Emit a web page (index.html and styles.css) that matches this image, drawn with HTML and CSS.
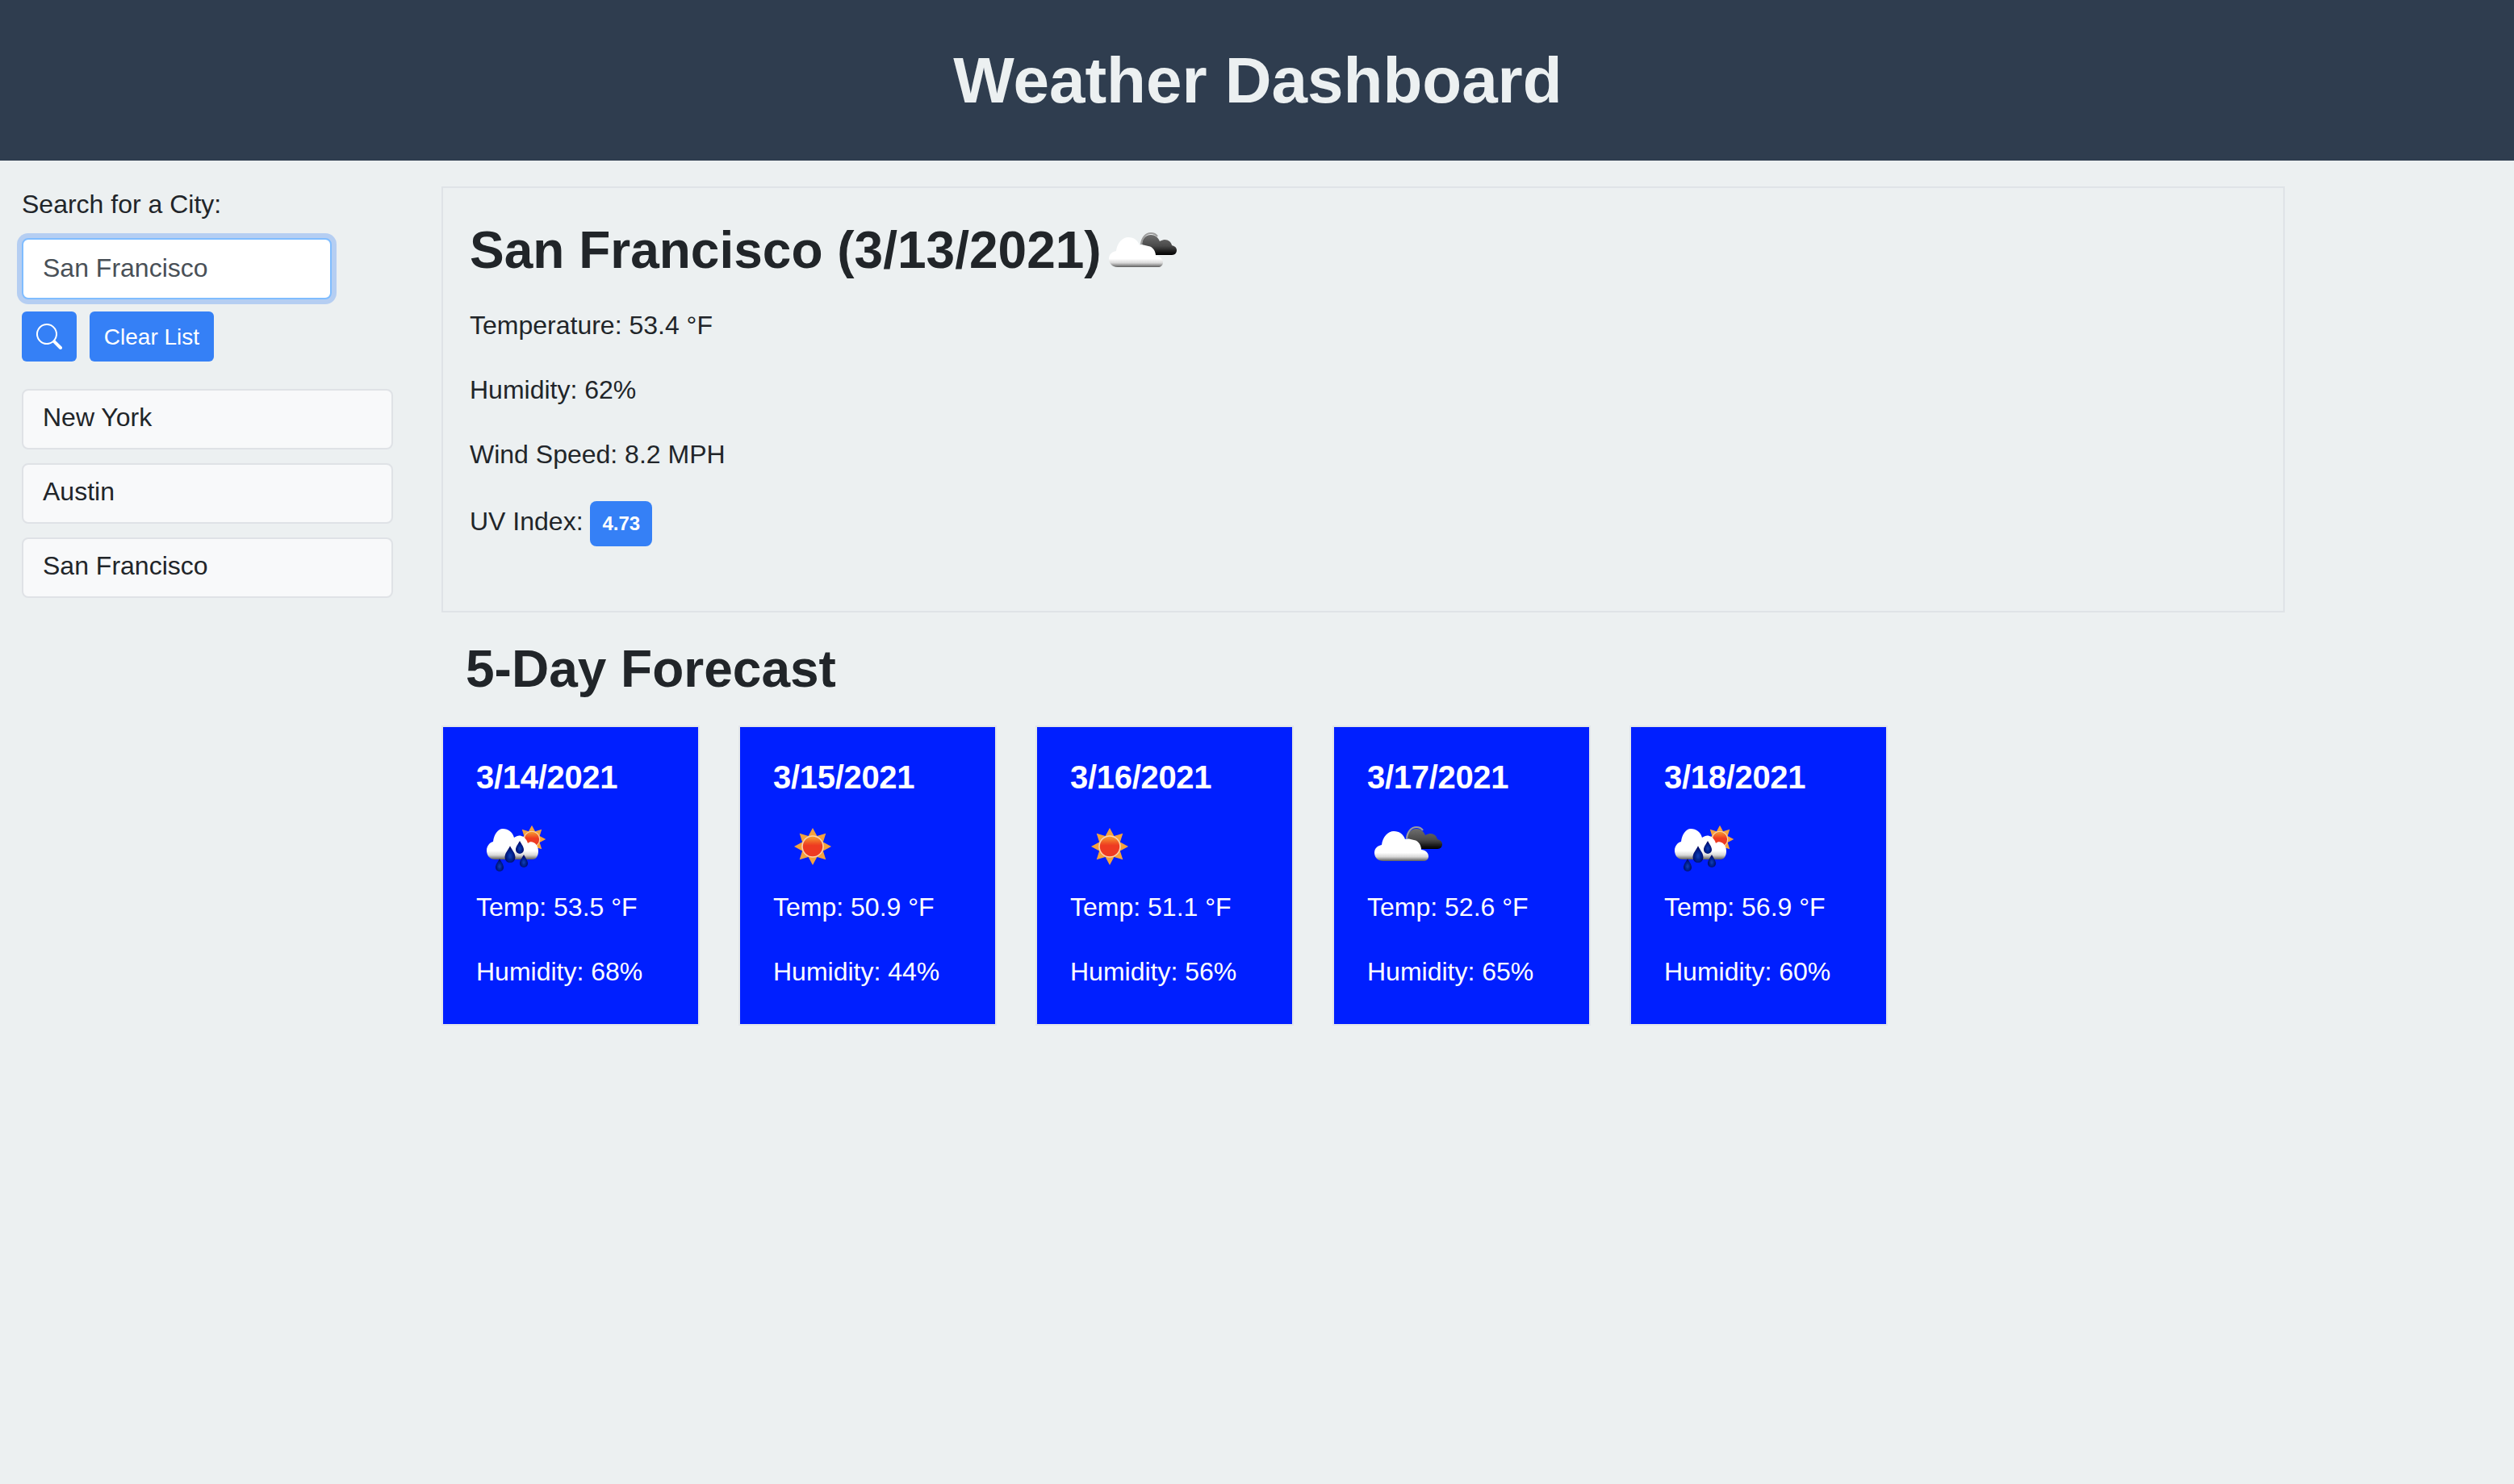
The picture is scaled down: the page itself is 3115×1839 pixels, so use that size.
FILE: index.html
```html
<!DOCTYPE html>
<html lang="en">
<head>
<meta charset="utf-8">
<title>Weather Dashboard</title>
<link rel="stylesheet" href="styles.css">
</head>
<body>
<svg class="defs" width="0" height="0" aria-hidden="true">
  <defs>
    <linearGradient id="gWhite" x1="0" y1="0" x2="0" y2="1">
      <stop offset="0" stop-color="#fff"/><stop offset=".72" stop-color="#fff"/><stop offset=".86" stop-color="#d8d8d8"/><stop offset="1" stop-color="#5e5e5e"/>
    </linearGradient>
    <linearGradient id="gDark" x1="0" y1="0" x2="0" y2="1">
      <stop offset="0" stop-color="#6e6e6e"/><stop offset=".55" stop-color="#4a4a4a"/><stop offset="1" stop-color="#000"/>
    </linearGradient>
    <linearGradient id="gDisc" x1="0" y1="0" x2="0" y2="1">
      <stop offset="0" stop-color="#f6a531"/><stop offset=".45" stop-color="#ee3a20"/><stop offset="1" stop-color="#ee3a20"/>
    </linearGradient>
    <radialGradient id="gDrop" cx=".5" cy=".6" r=".5">
      <stop offset="0" stop-color="#0b3fb5"/><stop offset=".6" stop-color="#03208c"/><stop offset="1" stop-color="#000a66"/>
    </radialGradient>
    <filter id="soft" x="-10%" y="-10%" width="120%" height="120%"><feGaussianBlur stdDeviation=".55"/></filter>
    <g id="sunShape">
      <polygon fill="#f4a23c" points="0,-23 5.4,-12.9 16.3,-16.3 12.9,-5.4 23,0 12.9,5.4 16.3,16.3 5.4,12.9 0,23 -5.4,12.9 -16.3,16.3 -12.9,5.4 -23,0 -12.9,-5.4 -16.3,-16.3 -5.4,-12.9"/>
      <circle r="13" fill="url(#gDisc)" stroke="#fbd3ae" stroke-width="1.6"/>
    </g>
    <path id="drop" d="M0 -9 C2 -5 5 -2 5 2 A5 5 0 0 1 -5 2 C-5 -2 -2 -5 0 -9 Z" fill="url(#gDrop)"/>
    <symbol id="iconClouds" viewBox="0 0 100 100">
      <g filter="url(#soft)">
        <path d="M62 53 L87 53 C91 53 93 50 93 47 C93 44 91 42 87 41 C86 37 83 34 78 34 C76 34 74 35 72 36 C70 31 66 28 61 28 C55 28 51 32 50 39 L55 50 Z" fill="url(#gDark)"/>
        <path d="M49 40 C50 31 55 26 61 26 C64 26 67 27 69 30" fill="none" stroke="#9c9c9c" stroke-width="2.2"/>
        <path d="M20 68 C12 68 9 62 9 58 C9 52 13 49 18 48 C19 38 26 31 33 31 C40 31 45 35 47 41 C50 40 54 41 58 42 C64 43 67 49 67 54 C72 54 76 58 76 62 C76 66 73 68 70 68 Z" fill="url(#gWhite)"/>
      </g>
    </symbol>
    <symbol id="iconRain" viewBox="0 0 100 100">
      <g filter="url(#soft)">
        <use href="#sunShape" transform="translate(69 41) scale(.75)"/>
        <path d="M23 66 C16 66 13 60 13 55 C13 49 17 45 21 44 C22 35 27 28 33 28 C40 28 45 32 47 39 C50 37 53 36 56 37 C60 38 63 42 64 46 C66 44 69 44 71 45 C75 47 77 51 77 56 C77 62 74 66 70 66 Z" fill="url(#gWhite)"/>
        <use href="#drop" transform="translate(29 74)"/>
        <use href="#drop" transform="translate(42 61) scale(1.3)"/>
        <use href="#drop" transform="translate(54 52)"/>
        <use href="#drop" transform="translate(59 69)"/>
      </g>
    </symbol>
    <symbol id="iconSun" viewBox="0 0 100 100">
      <g filter="url(#soft)"><use href="#sunShape" transform="translate(49 50)"/></g>
    </symbol>
  </defs>
</svg>

<header class="top"><h1 class="title">Weather Dashboard</h1></header>

<div class="layout">
  <aside class="side">
    <label class="search-label" for="city">Search for a City:</label>
    <input class="search-input" id="city" type="text" value="San Francisco">
    <div class="actions">
      <button class="btn btn-icon" type="button" aria-label="Search">
        <svg class="search-icon" viewBox="0 0 16 16" fill="#fff"><path d="M11.742 10.344a6.5 6.5 0 1 0-1.397 1.398h-.001c.03.04.062.078.098.115l3.85 3.85a1 1 0 0 0 1.415-1.414l-3.85-3.85a1.007 1.007 0 0 0-.115-.1zM12 6.5a5.5 5.5 0 1 1-11 0 5.5 5.5 0 0 1 11 0z"/></svg>
      </button>
      <button class="btn btn-text" type="button">Clear List</button>
    </div>
    <ul class="cities">
      <li class="city">New York</li>
      <li class="city">Austin</li>
      <li class="city">San Francisco</li>
    </ul>
  </aside>

  <main class="content">
    <section class="today">
      <h2 class="today-title">San Francisco (3/13/2021)<svg class="wx"><use href="#iconClouds"/></svg></h2>
      <p class="stat">Temperature: 53.4 °F</p>
      <p class="stat">Humidity: 62%</p>
      <p class="stat">Wind Speed: 8.2 MPH</p>
      <p class="stat uv">UV Index: <span class="badge">4.73</span></p>
    </section>

    <h2 class="forecast-title">5-Day Forecast</h2>

    <div class="cards">
      <article class="card">
        <h5 class="date">3/14/2021</h5>
        <svg class="wx"><use href="#iconRain"/></svg>
        <p class="stat">Temp: 53.5 °F</p>
        <p class="stat">Humidity: 68%</p>
      </article>
      <article class="card">
        <h5 class="date">3/15/2021</h5>
        <svg class="wx"><use href="#iconSun"/></svg>
        <p class="stat">Temp: 50.9 °F</p>
        <p class="stat">Humidity: 44%</p>
      </article>
      <article class="card">
        <h5 class="date">3/16/2021</h5>
        <svg class="wx"><use href="#iconSun"/></svg>
        <p class="stat">Temp: 51.1 °F</p>
        <p class="stat">Humidity: 56%</p>
      </article>
      <article class="card">
        <h5 class="date">3/17/2021</h5>
        <svg class="wx"><use href="#iconClouds"/></svg>
        <p class="stat">Temp: 52.6 °F</p>
        <p class="stat">Humidity: 65%</p>
      </article>
      <article class="card">
        <h5 class="date">3/18/2021</h5>
        <svg class="wx"><use href="#iconRain"/></svg>
        <p class="stat">Temp: 56.9 °F</p>
        <p class="stat">Humidity: 60%</p>
      </article>
    </div>
  </main>
</div>
</body>
</html>
```
FILE: styles.css
```css
* { box-sizing: border-box; }

html, body { height: 100%; }

body {
  margin: 0;
  background: #ecf0f1;
  color: #212529;
  font-family: "Liberation Sans", Arial, sans-serif;
  font-size: 32px;
  line-height: 48px;
}

.defs { position: absolute; }

.top {
  height: 199px;
  padding-left: 2px;
  background: #2f3d4f;
  display: flex;
  align-items: center;
  justify-content: center;
}

.title {
  margin: 0;
  color: #ecf0f1;
  font-size: 80px;
  line-height: 96px;
  font-weight: 700;
}

.layout { display: flex; align-items: flex-start; }

.side {
  width: 547px;
  flex: none;
  padding: 30px 0 0 27px;
}

.search-label { display: block; height: 66px; line-height: 48px; }

.search-input {
  display: block;
  width: 384px;
  height: 76px;
  padding: 0 24px 2px;
  border: 2px solid #80bdff;
  border-radius: 8px;
  background: #fff;
  box-shadow: 0 0 0 6px rgba(52, 128, 246, .3);
  color: #495057;
  font: 32px "Liberation Sans", Arial, sans-serif;
  outline: none;
}

.actions { display: flex; gap: 16px; margin-top: 15px; }

.btn {
  height: 62px;
  border: 0;
  border-radius: 6px;
  background: #3580f6;
  color: #fff;
  font: 28px "Liberation Sans", Arial, sans-serif;
  padding: 0;
  display: flex;
  align-items: center;
  justify-content: center;
}

.btn-icon { width: 68px; }
.btn-text { width: 154px; padding-top: 1px; }
.search-icon { width: 32px; height: 32px; }

.cities {
  list-style: none;
  margin: 34px 0 0;
  padding: 0;
  width: 460px;
  display: flex;
  flex-direction: column;
  gap: 17px;
}

.city {
  height: 75px;
  padding: 9px 24px;
  background: #f8f9fa;
  border: 2px solid #dfe2e6;
  border-radius: 8px;
}

.content {
  width: 2284px;
  flex: none;
  padding-top: 32px;
}

.today {
  height: 528px;
  padding: 32px 33px;
  border: 2px solid #dfe3e7;
}

.today-title {
  margin: 0 0 14px;
  display: flex;
  align-items: flex-start;
  height: 100px;
  font-size: 64px;
  line-height: 90px;
  font-weight: 700;
}

.wx { display: block; width: 100px; height: 100px; flex: none; }

.today-title .wx { margin-top: -2px; }

.stat { margin: 0 0 32px; }

.uv { margin: 0; padding-top: 2px; }

.badge {
  display: inline-block;
  vertical-align: middle;
  padding: 0 15px;
  height: 56px;
  line-height: 56px;
  background: #3580f6;
  border-radius: 8px;
  color: #fff;
  font-size: 24px;
  font-weight: 700;
}

.forecast-title {
  margin: 32px 0 34px 30px;
  font-size: 64px;
  line-height: 76px;
  font-weight: 700;
}

.cards { display: flex; gap: 52px; padding-left: 2px; }

.card {
  width: 316px;
  height: 368px;
  padding: 38px 41px 0;
  background: #001fff;
  color: #fff;
  outline: 2px solid #e3e6ea;
}

.date {
  margin: 0 0 12px;
  font-size: 40px;
  line-height: 48px;
  font-weight: 700;
  letter-spacing: -.3px;
}

.card .wx { margin-bottom: 1px; }
```
